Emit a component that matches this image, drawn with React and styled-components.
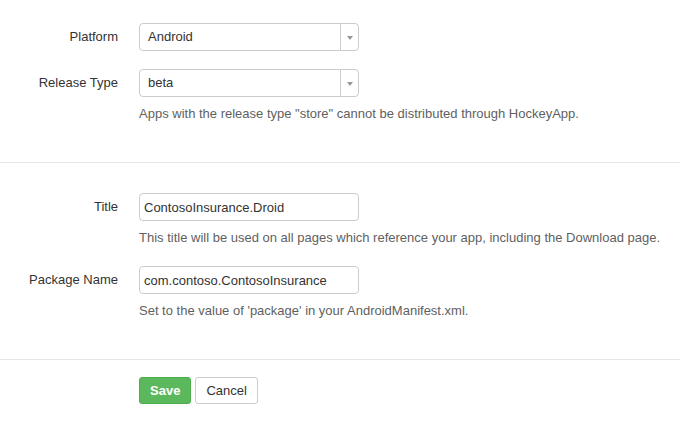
import React from "react";
import styled, { createGlobalStyle } from "styled-components";

const Global = createGlobalStyle`
  html, body { margin: 0; padding: 0; background: #fff; }
  body {
    font-family: "Liberation Sans", Arial, sans-serif;
    font-size: 13px;
    line-height: 18px;
    color: #333;
  }
`;

const Page = styled.form`
  width: 680px;
`;

const Section = styled.div`
  padding: ${(p) => p.$pad};
  border-bottom: ${(p) => (p.$divider ? "1px solid #e5e5e5" : "none")};
  display: flex;
  flex-direction: column;
  gap: ${(p) => p.$gap || "0"};
`;

const Row = styled.div`
  display: grid;
  grid-template-columns: 118px 1fr;
  column-gap: 21px;
  align-items: start;
`;

const Label = styled.label`
  text-align: right;
  padding-top: 5px;
  color: #333;
  white-space: nowrap;
`;

const Field = styled.div`
  display: flex;
  flex-direction: column;
  gap: 8px;
`;

const SelectBox = styled.div`
  box-sizing: border-box;
  width: 220px;
  height: 28px;
  border: 1px solid #ccc;
  border-radius: 4px;
  display: flex;
  align-items: stretch;
  background: #fff;
`;

const SelectValue = styled.span`
  flex: 1;
  padding: 4px 8px;
  color: #333;
`;

const ArrowCell = styled.span`
  width: 17px;
  border-left: 1px solid #ccc;
  display: flex;
  align-items: center;
  justify-content: center;
  &::after {
    content: "";
    width: 0;
    height: 0;
    border-left: 3px solid transparent;
    border-right: 3px solid transparent;
    border-top: 4px solid #999;
    margin-top: 1px;
  }
`;

const Input = styled.input`
  box-sizing: border-box;
  width: 220px;
  height: 28px;
  border: 1px solid #ccc;
  border-radius: 4px;
  padding: 4px 4px;
  font: inherit;
  color: #333;
  outline: none;
`;

const Help = styled.span`
  color: #5f5f5f;
`;

const Actions = styled.div`
  display: flex;
  gap: 4px;
  padding-left: 139px;
`;

const Button = styled.button`
  box-sizing: border-box;
  height: 27px;
  padding: 0 10px;
  border-radius: 3px;
  font-family: inherit;
  font-size: 13px;
  font-weight: ${(p) => (p.$primary ? "bold" : "normal")};
  color: ${(p) => (p.$primary ? "#fff" : "#333")};
  background: ${(p) => (p.$primary ? "#5cb85c" : "#fff")};
  border: 1px solid ${(p) => (p.$primary ? "#4cae4c" : "#ccc")};
  cursor: pointer;
`;

function Select({ value }) {
  return (
    <SelectBox>
      <SelectValue>{value}</SelectValue>
      <ArrowCell />
    </SelectBox>
  );
}

export default function App() {
  return (
    <>
      <Global />
      <Page onSubmit={(e) => e.preventDefault()}>
        <Section $pad="23px 0 39px" $gap="18px" $divider>
          <Row>
            <Label>Platform</Label>
            <Field>
              <Select value="Android" />
            </Field>
          </Row>
          <Row>
            <Label>Release Type</Label>
            <Field>
              <Select value="beta" />
              <Help>Apps with the release type "store" cannot be distributed through HockeyApp.</Help>
            </Field>
          </Row>
        </Section>
        <Section $pad="30px 0 39px" $gap="19px" $divider>
          <Row>
            <Label>Title</Label>
            <Field>
              <Input defaultValue="ContosoInsurance.Droid" />
              <Help>This title will be used on all pages which reference your app, including the Download page.</Help>
            </Field>
          </Row>
          <Row>
            <Label>Package Name</Label>
            <Field>
              <Input defaultValue="com.contoso.ContosoInsurance" />
              <Help>Set to the value of 'package' in your AndroidManifest.xml.</Help>
            </Field>
          </Row>
        </Section>
        <Section $pad="17px 0 30px">
          <Actions>
            <Button $primary type="submit">Save</Button>
            <Button type="button">Cancel</Button>
          </Actions>
        </Section>
      </Page>
    </>
  );
}
